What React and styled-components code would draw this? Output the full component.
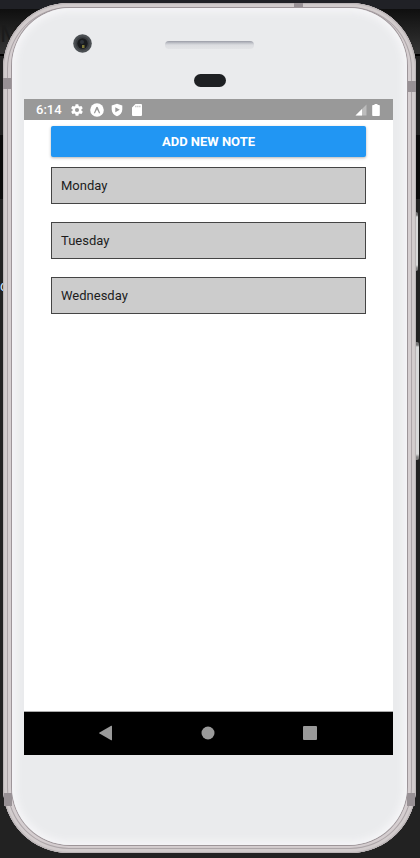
import React from 'react';
import styled, { createGlobalStyle } from 'styled-components';

const GlobalStyle = createGlobalStyle`
  *, *::before, *::after { box-sizing: border-box; }
  body { margin: 0; font-family: Roboto, "Liberation Sans", sans-serif; }
`;

const Desktop = styled.div`
  position: relative;
  display: flex;
  min-height: 100vh;
  padding: 3px 4px 5px;
  overflow: hidden;
  background: linear-gradient(
    #202126 0 9px, #0f0f0f 9px, #353535 54px, #000 54px 56px,
    #222 56px 135px, #0b0b0b 135px 199px, #222 199px
  );
`;

const BackdropText = styled.span`
  position: absolute;
  left: 0;
  top: ${(p) => p.$top};
  font-size: ${(p) => p.$size};
  line-height: 1;
  color: ${(p) => p.$color};
`;

const SideKey = styled.span`
  position: absolute;
  right: ${(p) => p.$right};
  top: ${(p) => p.$top};
  width: 5px;
  height: ${(p) => p.$height};
  border-radius: 2px;
  background: linear-gradient(#777 0 3px, #d8d9d9 5px calc(100% - 6px), #858585 calc(100% - 3px));
`;

const Phone = styled.div`
  position: relative;
  flex: 1;
  display: flex;
  margin-left: -1px;
  padding: 5px 9px 8px;
  border-radius: 66px;
  background: #d5ced0;
  box-shadow: inset 0 0 1px 1px #b9b3b5, inset 0 0 0 4px #d2cccd, inset 0 0 0 5px #aca5a8,
    inset 0 -3px 2px 1px #8e888a;
`;

const Band = styled.span`
  position: absolute;
  left: ${(p) => p.$left || 'auto'};
  right: ${(p) => p.$right || 'auto'};
  top: ${(p) => p.$top || 'auto'};
  bottom: ${(p) => p.$bottom || 'auto'};
  width: ${(p) => p.$width || '8px'};
  height: ${(p) => p.$height || '11px'};
  background: #989195;
`;

const Face = styled.div`
  position: relative;
  flex: 1;
  display: flex;
  flex-direction: column;
  padding: 0 14px 0 12px;
  border-radius: 58px;
  background: #eaebed;
  box-shadow: 0 0 0 1px #9d9599, inset 0 0 7px 4px #f5f5f7;
`;

const FaceTop = styled.div`
  height: 91px;
  flex: none;
  display: flex;
  flex-direction: column;
  align-items: center;
  gap: 21px;
  padding-top: 26px;
  margin-right: -2px;
`;

const SpeakerRow = styled.div`
  width: 100%;
  display: grid;
  grid-template-columns: 1fr auto 1fr;
  align-items: center;
`;

const Camera = styled.svg`
  width: 19px;
  height: 19px;
  margin-left: 49px;
`;

const Speaker = styled.div`
  width: 89px;
  height: 8px;
  margin-top: 2px;
  border-radius: 4px;
  background: linear-gradient(#9a9ca6, #bfc1c8 2px, #dcdde1 4px, #e2e3e6);
`;

const Sensor = styled.div`
  width: 32px;
  height: 13px;
  border-radius: 7px;
  background: #1e2023;
`;

const Screen = styled.div`
  flex: 1;
  display: flex;
  flex-direction: column;
  background: #fff;
`;

const StatusBar = styled.header`
  height: 21px;
  display: flex;
  align-items: center;
  justify-content: space-between;
  padding: 0 12px;
  background: #999;
  color: #fff;
`;

const StatusGroup = styled.div`
  display: flex;
  align-items: center;
  gap: ${(p) => p.$gap};
`;

const Clock = styled.time`
  margin-right: 2px;
  font-size: 13px;
  font-weight: 500;
  line-height: 21px;
`;

const Icon = styled.svg`
  display: block;
  width: ${(p) => p.$width || '14px'};
  height: 14px;
  fill: currentColor;
`;

const Notes = styled.main`
  flex: 1;
  padding: 6px 27px;
`;

const AddButton = styled.button`
  display: block;
  width: 100%;
  height: 31px;
  padding: 0;
  border: 0;
  border-radius: 2px;
  background: #2196f3;
  box-shadow: 0 1px 3px rgba(0, 0, 0, 0.3);
  color: #fff;
  font-family: inherit;
  font-size: 13px;
  font-weight: 700;
  line-height: 32px;
`;

const NoteList = styled.ul`
  display: grid;
  gap: 18px;
  margin: 10px 0 0;
  padding: 0;
  list-style: none;
`;

const Note = styled.li`
  height: 37px;
  padding: 0 9px;
  border: 1px solid #444;
  background: #ccc;
  color: #1c1c1c;
  font-size: 13px;
  line-height: 35px;
`;

const NavBar = styled.nav`
  height: 44px;
  display: flex;
  align-items: center;
  justify-content: center;
  gap: 86px;
  padding: 0 2px 2px 0;
  border-top: 1px solid #aaa;
  background: #000;
`;

const NavButton = styled.button`
  width: 16px;
  height: 16px;
  padding: 0;
  border: 0;
  background: none;
  color: #9a9a9a;
`;

const NavIcon = styled.svg`
  display: block;
  width: 16px;
  height: 16px;
  fill: currentColor;
`;

const FaceBottom = styled.div`
  height: 90px;
  flex: none;
`;

const notes = ['Monday', 'Tuesday', 'Wednesday'];

export default function App() {
  return (
    <>
      <GlobalStyle />
      <Desktop>
        <BackdropText $top="22px" $size="24px" $color="#1b1b1b" aria-hidden="true">M</BackdropText>
        <BackdropText $top="279px" $size="14px" $color="#cfe6ff" aria-hidden="true">c</BackdropText>
        <SideKey $right="2px" $top="212px" $height="59px" />
        <SideKey $right="1px" $top="342px" $height="118px" />
        <Phone>
          <Band $left="0" $top="75px" />
          <Band $right="0" $top="78px" />
          <Band $left="291px" $top="0" $width="9px" $height="5px" />
          <Band $left="1px" $bottom="47px" $height="13px" />
          <Band $right="1px" $bottom="47px" $height="13px" />
          <Face>
            <FaceTop>
              <SpeakerRow>
                <Camera viewBox="0 0 19 19" aria-hidden="true">
                  <circle cx="9.5" cy="9.5" r="9.3" fill="#4b4f53" />
                  <circle cx="9.5" cy="9.5" r="7" fill="#3a3d41" />
                  <circle cx="9.5" cy="9.5" r="5.2" fill="#191b1e" />
                  <circle cx="9" cy="8" r="2" fill="#30343b" />
                  <path d="M9 11h2.5v3H9z" fill="#7c7637" />
                </Camera>
                <Speaker />
              </SpeakerRow>
              <Sensor />
            </FaceTop>
            <Screen>
              <StatusBar>
                <StatusGroup $gap="6px">
                  <Clock>6:14</Clock>
                  <Icon viewBox="0 0 24 24" aria-hidden="true">
                    <path fillRule="evenodd" d="M19.4 13a7.500 7.500 0 0 0 0-2l2.100-1.600c.2-.2.3-.4.1-.7l-2-3.400c-.1-.2-.4-.3-.6-.2l-2.500 1a7.300 7.300 0 0 0-1.700-1l-.4-2.600a.5.5 0 0 0-.5-.5h-4a.5.5 0 0 0-.5.5L9 5.100a7.300 7.300 0 0 0-1.700 1l-2.500-1c-.2-.1-.5 0-.6.2l-2 3.400c-.1.3-.1.5.1.7L4.600 11a7.500 7.500 0 0 0 0 2l-2.200 1.600c-.2.2-.2.400-.1.700l2 3.400c.1.2.4.3.6.2l2.500-1a7.300 7.300 0 0 0 1.700 1l.4 2.600c0 .3.2.5.5.5h4c.2 0 .5-.2.5-.5l.4-2.600a7.300 7.300 0 0 0 1.700-1l2.500 1c.2.1.5 0 .6-.2l2-3.400c.1-.3.1-.5-.1-.7zM12 15.500a3.500 3.500 0 1 1 0-7 3.500 3.500 0 0 1 0 7z" />
                  </Icon>
                  <Icon viewBox="0 0 14 14" aria-hidden="true">
                    <circle cx="7" cy="7" r="6.800" />
                    <path d="M3.800 10.200 6.200 4.200Q7 3.200 7.800 4.200L10.200 10.200L9 10.200Q8 8.500 7 6.600Q6 8.500 5 10.200z" fill="#999" />
                  </Icon>
                  <Icon viewBox="0 0 14 14" aria-hidden="true">
                    <path fillRule="evenodd" d="M7 .8 12.300 2.600V6.500C12.300 9.800 10 12.100 7 13.200 4 12.100 1.700 9.800 1.700 6.500V2.600zM5.300 4.200v5L9.800 6.700z" />
                  </Icon>
                  <Icon viewBox="0 0 14 14" aria-hidden="true">
                    <path fillRule="evenodd" d="M5.500 1H11q1 0 1 1v10q0 1-1 1H3q-1 0-1-1V4.500zM5.500 2.800v1.500h.8v-1.500zM7.500 2.800v1.500h.8v-1.500zM9.500 2.800v1.500h.8v-1.500z" />
                  </Icon>
                </StatusGroup>
                <StatusGroup $gap="5px">
                  <Icon $width="12px" viewBox="0 0 12 14" aria-hidden="true">
                    <path d="M11.500 1.500v11H.5z" opacity=".35" />
                    <path d="M7 6v6.500H.5z" />
                  </Icon>
                  <Icon $width="9px" viewBox="0 0 9 14" aria-hidden="true">
                    <path d="M2.500 1h3v1h1.500q.8 0 .8.800v9.400q0 .8-.8.800h-6q-.8 0-.8-.8V2.800q0-.8.8-.8h1.500z" />
                  </Icon>
                </StatusGroup>
              </StatusBar>
              <Notes>
                <AddButton type="button">ADD NEW NOTE</AddButton>
                <NoteList>
                  {notes.map((note) => (
                    <Note key={note}>{note}</Note>
                  ))}
                </NoteList>
              </Notes>
              <NavBar>
                <NavButton type="button" aria-label="Back">
                  <NavIcon viewBox="0 0 16 16"><path d="M14 1.200v13.600q0 .8-.8.400L1.500 8.600q-.9-.6 0-1.200L13.200.8q.8-.4.8.4z" /></NavIcon>
                </NavButton>
                <NavButton type="button" aria-label="Home">
                  <NavIcon viewBox="0 0 16 16"><circle cx="8" cy="8" r="6.500" /></NavIcon>
                </NavButton>
                <NavButton type="button" aria-label="Recent apps">
                  <NavIcon viewBox="0 0 16 16"><rect x="1" y="1" width="14" height="14" rx="1" /></NavIcon>
                </NavButton>
              </NavBar>
            </Screen>
            <FaceBottom />
          </Face>
        </Phone>
      </Desktop>
    </>
  );
}
